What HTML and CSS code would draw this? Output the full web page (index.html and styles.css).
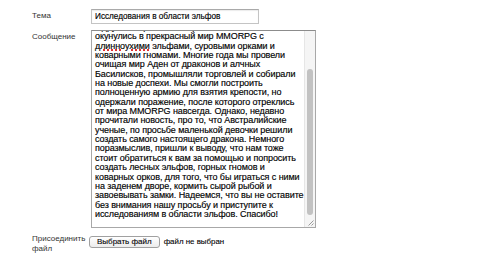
FILE: index.html
```html
<!DOCTYPE html>
<html lang="ru">
<head>
<meta charset="utf-8">
<link rel="stylesheet" href="styles.css">
</head>
<body>
<form class="form">
  <div class="row row-subject">
    <div class="label">Тема</div>
    <div class="field"><div class="input">Исследования в области эльфов</div></div>
  </div>
  <div class="row row-message">
    <div class="label">Сообщение</div>
    <div class="field">
      <div class="textarea">
        <div class="ta-view">
          <div class="ta-text"><span class="clipped">с друзьями решили попробовать что-то новое и</span><br>окунулись в прекрасный мир MMORPG с<br><span class="typo">длинноухими</span> эльфами, суровыми орками и<br>коварными гномами. Многие года мы провели<br>очищая мир Аден от драконов и алчных<br>Басилисков, промышляли торговлей и собирали<br>на новые доспехи. Мы смогли построить<br>полноценную армию для взятия крепости, но<br>одержали поражение, после которого отреклись<br>от мира MMORPG навсегда. Однако, недавно<br>прочитали новость, про то, что Австралийские<br>ученые, по просьбе маленькой девочки решили<br>создать самого настоящего дракона. Немного<br>поразмыслив, пришли к выводу, что нам тоже<br>стоит обратиться к вам за помощью и попросить<br>создать лесных эльфов, горных гномов и<br>коварных орков, для того, что бы играться с ними<br>на заденем дворе, кормить сырой рыбой и<br>завоевывать замки. Надеемся, что вы не оставите<br>без внимания нашу просьбу и приступите к<br>исследованиям в области эльфов. Спасибо!</div>
        </div>
        <div class="scrollbar"><div class="thumb"></div></div>
        <svg class="grip" width="7" height="7" viewBox="0 0 7 7"><path d="M6.5 1.5L1.5 6.5M6.5 4.5L4.5 6.5" stroke="#9a9a9a" stroke-width="1"/></svg>
      </div>
    </div>
  </div>
  <div class="row row-file">
    <div class="label">Присоединить<br>файл</div>
    <div class="field file">
      <span class="button">Выбрать файл</span>
      <span class="nofile">файл не выбран</span>
    </div>
  </div>
</form>
</body>
</html>
```
FILE: styles.css
```css
html, body {
  margin: 0;
  padding: 0;
  background: #fff;
}
body {
  font-family: "Liberation Sans", Arial, sans-serif;
  color: #222;
  width: 500px;
  height: 260px;
  overflow: hidden;
}
.form {
  padding: 9px 0 0 32px;
  display: flex;
  flex-direction: column;
  gap: 6px;
}
.row {
  display: flex;
}
.label {
  width: 59px;
  font-size: 8px;
  line-height: 10px;
  color: #333;
  padding-top: 2px;
}
.input {
  width: 163px;
  height: 13px;
  border: 1px solid #c4c4c4;
  border-top-color: #a9a9a9;
  box-shadow: inset 0 1px 1px rgba(0,0,0,0.08);
  font-size: 8.2px;
  line-height: 13px;
  padding-left: 3px;
  color: #000;
  -webkit-text-stroke: 0.15px #000;
}
.textarea {
  position: relative;
  width: 223px;
  height: 196px;
  border: 1px solid #a8a8a8;
  border-top-color: #8c8c8c;
  display: flex;
  background: #fff;
}
.ta-view {
  flex: 1;
  overflow: hidden;
  padding-left: 3px;
}
.ta-text {
  font-size: 9px;
  line-height: 9.35px;
  letter-spacing: -0.08px;
  white-space: nowrap;
  color: #000;
  -webkit-text-stroke: 0.15px #000;
  margin-top: -8px;
}
.typo {
  text-decoration: underline dotted #e03030;
  text-decoration-thickness: 1.5px;
  text-underline-offset: 0.5px;
}
.scrollbar {
  width: 11px;
  border-left: 1px solid #e6e6e6;
  background: #f5f5f5;
  display: flex;
  flex-direction: column;
  padding: 38px 0 12px 0;
  box-sizing: border-box;
  align-items: center;
}
.thumb {
  width: 6px;
  flex: 1;
  background: #c2c2c2;
  border-radius: 3px;
}
.grip {
  position: absolute;
  right: 1px;
  bottom: 1px;
}
.row-file {
  margin-top: -1px;
}
.row-file .label {
  padding-top: 1px;
}
.file {
  display: flex;
  align-items: flex-start;
  gap: 4px;
  padding-top: 3px;
}
.button {
  font-size: 8px;
  line-height: 10px;
  padding: 0 7px 0 7px;
  border: 1px solid #a0a0a0;
  border-radius: 3px;
  background: linear-gradient(#ffffff, #ececec);
  color: #000;
  -webkit-text-stroke: 0.1px #000;
  margin-left: -2px;
}
.nofile {
  font-size: 7.9px;
  line-height: 12px;
  color: #000;
  -webkit-text-stroke: 0.1px #000;
}
```
